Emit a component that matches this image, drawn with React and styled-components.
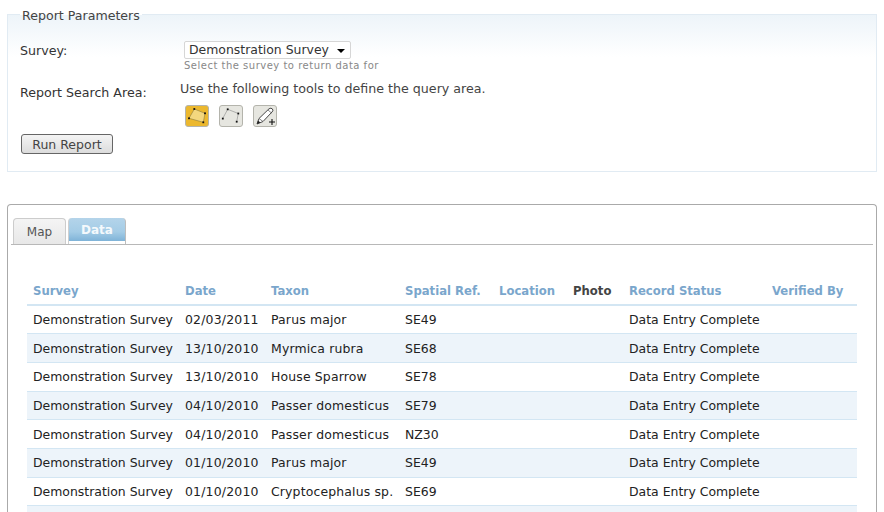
import React from 'react';
import styled, { createGlobalStyle } from 'styled-components';

const Global = createGlobalStyle`
  html, body { margin: 0; padding: 0; background: #fff; height: 512px; overflow: hidden; }
  body { font-family: "DejaVu Sans", Verdana, sans-serif; font-size: 12.45px; color: #222; }
`;
const Page = styled.div`
  padding: 7px 7px 0;
  width: 870px;
`;
const Params = styled.fieldset`
  margin: 0 0 32px;
  padding: 0 12px 0 12px;
  height: 165px;
  box-sizing: border-box;
  border: 1px solid #e1ebf3;
  background: linear-gradient(#edf4f9 0, #fff 42px);
  min-width: 0;
`;
const Legend = styled.legend`
  margin-left: 0;
  padding: 0 2px;
  font-size: 12.6px;
  color: #444;
  line-height: 15px;
  position: relative;
  top: 1px;
`;
const FormRow = styled.div`
  display: flex;
  align-items: flex-start;
`;
const Label = styled.label`
  width: 160px;
  color: #333;
  font-size: 12.65px;
  line-height: 15px;
  padding-top: ${p => p.$top}px;
`;
const Field = styled.div`
  display: flex;
  flex-direction: column;
  margin-left: ${p => p.$shift || 0}px;
  padding-top: ${p => p.$top}px;
`;
const Select = styled.div`
  width: 167px;
  height: 18px;
  box-sizing: border-box;
  border: 1px solid #d6d6d6;
  border-radius: 2px;
  background: #fff;
  display: flex;
  align-items: center;
  justify-content: space-between;
  padding: 0 4px 2px;
  color: #333;
`;
const Arrow = styled.span`
  width: 0;
  height: 0;
  border-left: 4px solid transparent;
  border-right: 4px solid transparent;
  border-top: 4px solid #000;
  margin: 3px 1px 0 0;
`;
const Hint = styled.div`
  font-size: 10px;
  color: #888;
  letter-spacing: 0.5px;
  line-height: 13px;
`;
const Intro = styled.div`
  color: #444;
  font-size: 12.65px;
  line-height: 15px;
`;
const Tools = styled.div`
  display: flex;
  gap: 10px;
  margin: 9px 0 0 5px;
`;
const Tool = styled.div`
  width: 24px;
  height: 22px;
  box-sizing: border-box;
  border: 1px solid #b4b4ac;
  border-radius: 3px;
  background: ${p => (p.$active ? '#ecb82e' : '#e6e6e0')};
  display: flex;
`;
const RunButton = styled.button`
  display: block;
  margin: 7px 0 0 1px;
  width: 92px;
  height: 20px;
  padding: 0;
  border: 1px solid #666;
  border-radius: 3px;
  background: linear-gradient(#f4f4f4, #dcdcdc);
  font: 12.5px "DejaVu Sans", Verdana, sans-serif;
  color: #444;
`;
const Panel = styled.section`
  height: 308px;
  box-sizing: border-box;
  border: 1px solid #aaa;
  border-bottom: 0;
  border-radius: 4px 4px 0 0;
  padding: 13px 3px 0 3px;
  overflow: hidden;
`;
const TabBar = styled.div`
  display: flex;
  gap: 2px;
  height: 27px;
  box-sizing: border-box;
  border-bottom: 1px solid #b8b8b8;
  padding-left: 2px;
`;
const Tab = styled.div`
  box-sizing: border-box;
  height: 26px;
  border-radius: 4px 4px 0 0;
  line-height: 27px;
  text-align: center;
  font-size: 12px;
  width: ${p => p.$w}px;
  ${p => p.$active
    ? `background: linear-gradient(#b4d4ea, #a4cce6 60%, #7fb3d8) no-repeat top / 100% 23px;
       color: #f4f9fc; font-weight: bold; line-height: 24px;
       border-left: 1px solid #cfcfcf; border-right: 1px solid #bdbdbd;`
    : `background: linear-gradient(#f4f4f4, #e8e8e8);
       color: #555; border: 1px solid #ccc; border-bottom: 0;`}
`;
const TableWrap = styled.div`
  padding: 32px 16px 0 16px;
`;
const Table = styled.table`
  width: 830px;
  border-collapse: collapse;
  table-layout: fixed;
`;
const Th = styled.th`
  box-sizing: border-box;
  text-align: left;
  font-weight: bold;
  font-size: 11.65px;
  padding: 0 0 0 6px;
  height: 28px;
  width: ${p => p.$w}px;
  white-space: nowrap;
  color: ${p => (p.$plain ? '#444' : '#7aa6cc')};
  border-bottom: 2px solid #d3e6f3;
`;
const Tr = styled.tr`
  height: 28.7px;
  background: ${p => (p.$alt ? '#edf4fa' : '#fff')};
`;
const Td = styled.td`
  padding: 0 0 0 6px;
  white-space: nowrap;
  color: #222;
  border-bottom: 1px solid #d3e6f3;
  letter-spacing: ${p => p.$track || 0}px;
`;

const columns = [
  ['Survey', 152], ['Date', 86], ['Taxon', 134], ['Spatial Ref.', 94],
  ['Location', 74], ['Photo', 56, true], ['Record Status', 143], ['Verified By', 91],
];
const rows = [
  ['02/03/2011', 'Parus major', 'SE49'],
  ['13/10/2010', 'Myrmica rubra', 'SE68'],
  ['13/10/2010', 'House Sparrow', 'SE78'],
  ['04/10/2010', 'Passer domesticus', 'SE79'],
  ['04/10/2010', 'Passer domesticus', 'NZ30'],
  ['01/10/2010', 'Parus major', 'SE49'],
  ['01/10/2010', 'Cryptocephalus sp.', 'SE69'],
  ['', '', ''],
];

const Dot = ({ x, y }) => <rect x={x - 0.9} y={y - 0.9} width="1.8" height="1.8" fill="#111" />;

const PolygonIcon = () => (
  <svg width="22" height="20" viewBox="0 0 22 20">
    <path d="M8.3 3 L19 7.3 L17.3 16.3 L3 12.3 Z" fill="#f3d77e" stroke="#8a7a40" strokeWidth="0.6" />
    <Dot x={8.3} y={3} /><Dot x={19} y={7.3} /><Dot x={17.3} y={16.3} /><Dot x={3} y={12.3} />
  </svg>
);
const LineIcon = () => (
  <svg width="22" height="20" viewBox="0 0 22 20">
    <path d="M2.8 12.3 L7.7 3.3 L18.3 7.5 L16.7 15.7" fill="none" stroke="#888" strokeWidth="0.6" />
    <Dot x={2.8} y={12.6} /><Dot x={7.7} y={3.3} /><Dot x={18.3} y={7.5} /><Dot x={16.7} y={15.7} />
  </svg>
);
const PencilIcon = () => (
  <svg width="22" height="20" viewBox="0 0 22 20">
    <path d="M3 18 L5 12.5 L15 2.8 Q17 1.5 18.5 3 Q19.5 5 18 6 L9 15.5 Z" fill="#fff" stroke="#333" strokeWidth="0.9" />
    <path d="M5 12.5 L9 15.5 M14 4 L17.5 7" stroke="#666" strokeWidth="0.8" fill="none" />
    <path d="M3 18 L4 14.6 L6.4 16.6 Z" fill="#222" />
    <path d="M18 13 V19 M15 16 H21" stroke="#111" strokeWidth="1.1" />
  </svg>
);

export default function App() {
  return (
    <Page>
      <Global />
      <Params>
        <Legend>Report Parameters</Legend>
        <FormRow>
          <Label $top={21}>Survey:</Label>
          <Field $shift={4} $top={19}>
            <Select>Demonstration Survey<Arrow /></Select>
            <Hint>Select the survey to return data for</Hint>
          </Field>
        </FormRow>
        <FormRow>
          <Label $top={13}>Report Search Area:</Label>
          <Field $top={9}>
            <Intro>Use the following tools to define the query area.</Intro>
            <Tools>
              <Tool $active><PolygonIcon /></Tool>
              <Tool><LineIcon /></Tool>
              <Tool><PencilIcon /></Tool>
            </Tools>
          </Field>
        </FormRow>
        <RunButton>Run Report</RunButton>
      </Params>
      <Panel>
        <TabBar>
          <Tab $w={53}>Map</Tab>
          <Tab $w={58} $active>Data</Tab>
        </TabBar>
        <TableWrap>
          <Table>
            <thead>
              <tr>
                {columns.map(([name, w, plain]) => (
                  <Th key={name} $w={w} $plain={plain}>{name}</Th>
                ))}
              </tr>
            </thead>
            <tbody>
              {rows.map((r, i) => (
                <Tr key={i} $alt={i % 2 === 1}>
                  <Td>{r[0] ? 'Demonstration Survey' : ''}</Td>
                  <Td $track={0.2}>{r[0]}</Td>
                  <Td $track={0.15}>{r[1]}</Td>
                  <Td>{r[2]}</Td>
                  <Td />
                  <Td />
                  <Td>{r[0] ? 'Data Entry Complete' : ''}</Td>
                  <Td />
                </Tr>
              ))}
            </tbody>
          </Table>
        </TableWrap>
      </Panel>
    </Page>
  );
}
